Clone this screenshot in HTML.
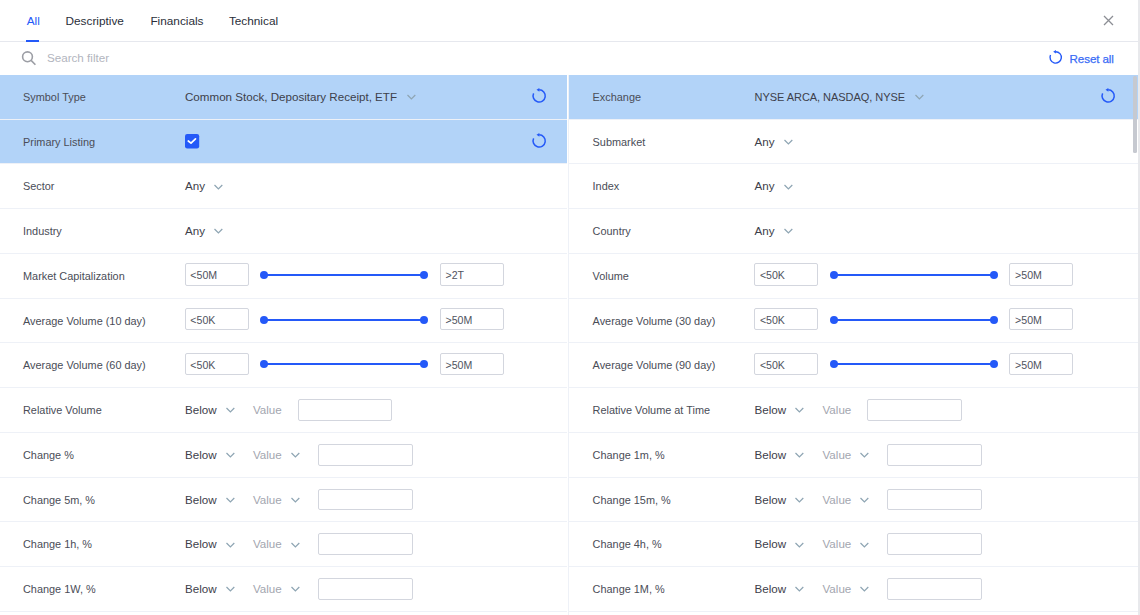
<!DOCTYPE html>
<html><head><meta charset="utf-8"><style>
html,body{margin:0;padding:0;width:1140px;height:615px;overflow:hidden;background:#fff;}
body{position:relative;font-family:"Liberation Sans",sans-serif;}
.abs{position:absolute;} svg{overflow:visible;}
.t{position:absolute;white-space:nowrap;line-height:1;}
.inp{position:absolute;box-sizing:border-box;border:1px solid #d3d6de;border-radius:2px;background:#fff;}
.dot{width:8px;height:8px;border-radius:50%;background:#2459f8;}
</style></head><body>
<div class="t" style="left:26.70px;top:16.01px;font-size:11.8px;color:#2459f8">All</div>
<div class="t" style="left:65.50px;top:16.01px;font-size:11.8px;color:#2a2e39">Descriptive</div>
<div class="t" style="left:150.40px;top:16.01px;font-size:11.8px;color:#2a2e39">Financials</div>
<div class="t" style="left:228.90px;top:16.01px;font-size:11.8px;color:#2a2e39">Technical</div>
<div class="abs" style="left:0;top:41px;width:1138px;height:1.4px;background:#e6e8ee"></div>
<div class="abs" style="left:26px;top:40px;width:13px;height:2.3px;background:#2459f8"></div>
<svg class="abs" style="left:1103.1px;top:15.3px" width="11" height="11" viewBox="0 0 11 11"><path d="M1 1 L10 10 M10 1 L1 10" stroke="#8c8e94" stroke-width="1.3"/></svg>
<svg class="abs" style="left:21px;top:50px" width="16" height="16" viewBox="0 0 16 16"><circle cx="6.5" cy="6.8" r="4.9" fill="none" stroke="#9c9ea5" stroke-width="1.6"/><path d="M10.1 10.4 L14.4 14.7" stroke="#9c9ea5" stroke-width="1.6"/></svg>
<div class="t" style="left:46.90px;top:51.53px;font-size:11.66px;color:#b2b5be">Search filter</div>
<svg class="abs" style="left:1048.50px;top:49.50px" width="14" height="14" viewBox="0 0 15 15"><path d="M1.62 5.32 A6.1 6.1 0 1 0 7.15 1.8" fill="none" stroke="#2459f8" stroke-width="1.5"/><path d="M4.5 1.8 L7.4 -0.1 L7.4 3.7 Z" fill="#2459f8"/></svg>
<div class="t" style="left:1069.60px;top:53.48px;font-size:11.6px;color:#3a6cf6"><span style="letter-spacing:-0.1px;-webkit-text-stroke:0.25px #3a6cf6">Reset all</span></div>
<div class="abs" style="left:0px;top:74.75px;width:567px;height:43.75px;background:#b2d3f8"></div>
<svg class="abs" style="left:532.00px;top:87.95px" width="15" height="15" viewBox="0 0 15 15"><path d="M1.62 5.32 A6.1 6.1 0 1 0 7.15 1.8" fill="none" stroke="#2459f8" stroke-width="1.5"/><path d="M4.5 1.8 L7.4 -0.1 L7.4 3.7 Z" fill="#2459f8"/></svg>
<div class="abs" style="left:0px;top:118.50px;width:567px;height:1px;background:#eef1f7"></div>
<div class="t" style="left:23.00px;top:91.82px;font-size:10.9px;color:#4a4d57">Symbol Type</div>
<div class="t" style="left:185.00px;top:90.93px;font-size:11.6px;color:#3d404a">Common Stock, Depositary Receipt, ETF</div>
<svg class="abs" style="left:406.85px;top:94.10px" width="9" height="6" viewBox="0 0 9 6"><path d="M0.5 1 L4.4 4.9 L8.3 1" fill="none" stroke="#8ea5b3" stroke-width="1.25"/></svg>
<div class="abs" style="left:0px;top:119.50px;width:567px;height:43.75px;background:#b2d3f8"></div>
<svg class="abs" style="left:532.00px;top:132.70px" width="15" height="15" viewBox="0 0 15 15"><path d="M1.62 5.32 A6.1 6.1 0 1 0 7.15 1.8" fill="none" stroke="#2459f8" stroke-width="1.5"/><path d="M4.5 1.8 L7.4 -0.1 L7.4 3.7 Z" fill="#2459f8"/></svg>
<div class="abs" style="left:0px;top:163.25px;width:567px;height:1px;background:#eef1f7"></div>
<div class="t" style="left:23.00px;top:136.57px;font-size:10.9px;color:#4a4d57">Primary Listing</div>
<svg class="abs" style="left:184.70px;top:134.30px" width="14.2" height="14.5" viewBox="0 0 14.2 14.5"><rect x="0" y="0" width="14.2" height="14.5" rx="2.2" fill="#2459f8"/><path d="M3.3 7.0 L6.0 9.1 L10.5 4.8" fill="none" stroke="#fff" stroke-width="1.7" stroke-linecap="round" stroke-linejoin="round"/></svg>
<div class="abs" style="left:0px;top:208.00px;width:567px;height:1px;background:#eef1f7"></div>
<div class="t" style="left:23.00px;top:181.32px;font-size:10.9px;color:#4a4d57">Sector</div>
<div class="t" style="left:185.00px;top:180.43px;font-size:11.6px;color:#3d404a">Any</div>
<svg class="abs" style="left:214.18px;top:183.50px" width="9" height="6" viewBox="0 0 9 6"><path d="M0.5 1 L4.4 4.9 L8.3 1" fill="none" stroke="#8ea5b3" stroke-width="1.25"/></svg>
<div class="abs" style="left:0px;top:252.75px;width:567px;height:1px;background:#eef1f7"></div>
<div class="t" style="left:23.00px;top:226.07px;font-size:10.9px;color:#4a4d57">Industry</div>
<div class="t" style="left:185.00px;top:225.18px;font-size:11.6px;color:#3d404a">Any</div>
<svg class="abs" style="left:214.18px;top:228.25px" width="9" height="6" viewBox="0 0 9 6"><path d="M0.5 1 L4.4 4.9 L8.3 1" fill="none" stroke="#8ea5b3" stroke-width="1.25"/></svg>
<div class="abs" style="left:0px;top:297.50px;width:567px;height:1px;background:#eef1f7"></div>
<div class="t" style="left:23.00px;top:270.82px;font-size:10.9px;color:#4a4d57">Market Capitalization</div>
<div class="inp" style="left:184.60px;top:263.25px;width:64.20px;height:22.30px"></div><div class="t" style="left:190.30px;top:270.48px;font-size:10.6px;color:#50535e">&lt;50M</div>
<div class="abs" style="left:264.00px;top:274px;width:160.40px;height:2px;background:#2459f8"></div>
<div class="abs dot" style="left:260.10px;top:270.75px"></div>
<div class="abs dot" style="left:420.40px;top:270.75px"></div>
<div class="inp" style="left:439.80px;top:263.25px;width:64.00px;height:22.30px"></div><div class="t" style="left:445.50px;top:270.48px;font-size:10.6px;color:#50535e">&gt;2T</div>
<div class="abs" style="left:0px;top:342.25px;width:567px;height:1px;background:#eef1f7"></div>
<div class="t" style="left:23.00px;top:315.57px;font-size:10.9px;color:#4a4d57">Average Volume (10 day)</div>
<div class="inp" style="left:184.60px;top:308.00px;width:64.20px;height:22.30px"></div><div class="t" style="left:190.30px;top:315.23px;font-size:10.6px;color:#50535e">&lt;50K</div>
<div class="abs" style="left:264.00px;top:319px;width:160.40px;height:2px;background:#2459f8"></div>
<div class="abs dot" style="left:260.10px;top:315.50px"></div>
<div class="abs dot" style="left:420.40px;top:315.50px"></div>
<div class="inp" style="left:439.80px;top:308.00px;width:64.00px;height:22.30px"></div><div class="t" style="left:445.50px;top:315.23px;font-size:10.6px;color:#50535e">&gt;50M</div>
<div class="abs" style="left:0px;top:387.00px;width:567px;height:1px;background:#eef1f7"></div>
<div class="t" style="left:23.00px;top:360.32px;font-size:10.9px;color:#4a4d57">Average Volume (60 day)</div>
<div class="inp" style="left:184.60px;top:352.75px;width:64.20px;height:22.30px"></div><div class="t" style="left:190.30px;top:359.98px;font-size:10.6px;color:#50535e">&lt;50K</div>
<div class="abs" style="left:264.00px;top:363px;width:160.40px;height:2px;background:#2459f8"></div>
<div class="abs dot" style="left:260.10px;top:360.25px"></div>
<div class="abs dot" style="left:420.40px;top:360.25px"></div>
<div class="inp" style="left:439.80px;top:352.75px;width:64.00px;height:22.30px"></div><div class="t" style="left:445.50px;top:359.98px;font-size:10.6px;color:#50535e">&gt;50M</div>
<div class="abs" style="left:0px;top:431.75px;width:567px;height:1px;background:#eef1f7"></div>
<div class="t" style="left:23.00px;top:405.07px;font-size:10.9px;color:#4a4d57">Relative Volume</div>
<div class="t" style="left:185.00px;top:404.18px;font-size:11.6px;color:#3d404a">Below</div>
<svg class="abs" style="left:225.60px;top:407.45px" width="9" height="6" viewBox="0 0 9 6"><path d="M0.5 1 L4.4 4.9 L8.3 1" fill="none" stroke="#8ea5b3" stroke-width="1.25"/></svg>
<div class="t" style="left:252.90px;top:404.18px;font-size:11.6px;color:#a3a6af">Value</div>
<div class="inp" style="left:297.70px;top:399.20px;width:94.80px;height:21.65px"></div>
<div class="abs" style="left:0px;top:476.50px;width:567px;height:1px;background:#eef1f7"></div>
<div class="t" style="left:23.00px;top:449.82px;font-size:10.9px;color:#4a4d57">Change %</div>
<div class="t" style="left:185.00px;top:448.93px;font-size:11.6px;color:#3d404a">Below</div>
<svg class="abs" style="left:225.60px;top:452.20px" width="9" height="6" viewBox="0 0 9 6"><path d="M0.5 1 L4.4 4.9 L8.3 1" fill="none" stroke="#8ea5b3" stroke-width="1.25"/></svg>
<div class="t" style="left:252.90px;top:448.93px;font-size:11.6px;color:#a3a6af">Value</div>
<svg class="abs" style="left:290.70px;top:452.20px" width="9" height="6" viewBox="0 0 9 6"><path d="M0.5 1 L4.4 4.9 L8.3 1" fill="none" stroke="#8ea5b3" stroke-width="1.25"/></svg>
<div class="inp" style="left:318.10px;top:443.95px;width:94.80px;height:21.65px"></div>
<div class="abs" style="left:0px;top:521.25px;width:567px;height:1px;background:#eef1f7"></div>
<div class="t" style="left:23.00px;top:494.57px;font-size:10.9px;color:#4a4d57">Change 5m, %</div>
<div class="t" style="left:185.00px;top:493.68px;font-size:11.6px;color:#3d404a">Below</div>
<svg class="abs" style="left:225.60px;top:496.95px" width="9" height="6" viewBox="0 0 9 6"><path d="M0.5 1 L4.4 4.9 L8.3 1" fill="none" stroke="#8ea5b3" stroke-width="1.25"/></svg>
<div class="t" style="left:252.90px;top:493.68px;font-size:11.6px;color:#a3a6af">Value</div>
<svg class="abs" style="left:290.70px;top:496.95px" width="9" height="6" viewBox="0 0 9 6"><path d="M0.5 1 L4.4 4.9 L8.3 1" fill="none" stroke="#8ea5b3" stroke-width="1.25"/></svg>
<div class="inp" style="left:318.10px;top:488.70px;width:94.80px;height:21.65px"></div>
<div class="abs" style="left:0px;top:566.00px;width:567px;height:1px;background:#eef1f7"></div>
<div class="t" style="left:23.00px;top:539.32px;font-size:10.9px;color:#4a4d57">Change 1h, %</div>
<div class="t" style="left:185.00px;top:538.43px;font-size:11.6px;color:#3d404a">Below</div>
<svg class="abs" style="left:225.60px;top:541.70px" width="9" height="6" viewBox="0 0 9 6"><path d="M0.5 1 L4.4 4.9 L8.3 1" fill="none" stroke="#8ea5b3" stroke-width="1.25"/></svg>
<div class="t" style="left:252.90px;top:538.43px;font-size:11.6px;color:#a3a6af">Value</div>
<svg class="abs" style="left:290.70px;top:541.70px" width="9" height="6" viewBox="0 0 9 6"><path d="M0.5 1 L4.4 4.9 L8.3 1" fill="none" stroke="#8ea5b3" stroke-width="1.25"/></svg>
<div class="inp" style="left:318.10px;top:533.45px;width:94.80px;height:21.65px"></div>
<div class="abs" style="left:0px;top:610.75px;width:567px;height:1px;background:#eef1f7"></div>
<div class="t" style="left:23.00px;top:584.07px;font-size:10.9px;color:#4a4d57">Change 1W, %</div>
<div class="t" style="left:185.00px;top:583.18px;font-size:11.6px;color:#3d404a">Below</div>
<svg class="abs" style="left:225.60px;top:586.45px" width="9" height="6" viewBox="0 0 9 6"><path d="M0.5 1 L4.4 4.9 L8.3 1" fill="none" stroke="#8ea5b3" stroke-width="1.25"/></svg>
<div class="t" style="left:252.90px;top:583.18px;font-size:11.6px;color:#a3a6af">Value</div>
<svg class="abs" style="left:290.70px;top:586.45px" width="9" height="6" viewBox="0 0 9 6"><path d="M0.5 1 L4.4 4.9 L8.3 1" fill="none" stroke="#8ea5b3" stroke-width="1.25"/></svg>
<div class="inp" style="left:318.10px;top:578.20px;width:94.80px;height:21.65px"></div>
<div class="abs" style="left:569px;top:74.75px;width:569px;height:43.75px;background:#b2d3f8"></div>
<svg class="abs" style="left:1101.00px;top:87.95px" width="15" height="15" viewBox="0 0 15 15"><path d="M1.62 5.32 A6.1 6.1 0 1 0 7.15 1.8" fill="none" stroke="#2459f8" stroke-width="1.5"/><path d="M4.5 1.8 L7.4 -0.1 L7.4 3.7 Z" fill="#2459f8"/></svg>
<div class="abs" style="left:569px;top:118.50px;width:569px;height:1px;background:#eef1f7"></div>
<div class="t" style="left:592.60px;top:91.82px;font-size:10.9px;color:#4a4d57">Exchange</div>
<div class="t" style="left:754.60px;top:92.24px;font-size:11.0px;color:#3d404a"><span style="letter-spacing:-0.05px">NYSE ARCA, NASDAQ, NYSE</span></div>
<svg class="abs" style="left:914.80px;top:94.20px" width="9" height="6" viewBox="0 0 9 6"><path d="M0.5 1 L4.4 4.9 L8.3 1" fill="none" stroke="#8ea5b3" stroke-width="1.25"/></svg>
<div class="abs" style="left:569px;top:163.25px;width:569px;height:1px;background:#eef1f7"></div>
<div class="t" style="left:592.60px;top:136.57px;font-size:10.9px;color:#4a4d57">Submarket</div>
<div class="t" style="left:754.60px;top:135.68px;font-size:11.6px;color:#3d404a">Any</div>
<svg class="abs" style="left:783.78px;top:138.75px" width="9" height="6" viewBox="0 0 9 6"><path d="M0.5 1 L4.4 4.9 L8.3 1" fill="none" stroke="#8ea5b3" stroke-width="1.25"/></svg>
<div class="abs" style="left:569px;top:208.00px;width:569px;height:1px;background:#eef1f7"></div>
<div class="t" style="left:592.60px;top:181.32px;font-size:10.9px;color:#4a4d57">Index</div>
<div class="t" style="left:754.60px;top:180.43px;font-size:11.6px;color:#3d404a">Any</div>
<svg class="abs" style="left:783.78px;top:183.50px" width="9" height="6" viewBox="0 0 9 6"><path d="M0.5 1 L4.4 4.9 L8.3 1" fill="none" stroke="#8ea5b3" stroke-width="1.25"/></svg>
<div class="abs" style="left:569px;top:252.75px;width:569px;height:1px;background:#eef1f7"></div>
<div class="t" style="left:592.60px;top:226.07px;font-size:10.9px;color:#4a4d57">Country</div>
<div class="t" style="left:754.60px;top:225.18px;font-size:11.6px;color:#3d404a">Any</div>
<svg class="abs" style="left:783.78px;top:228.25px" width="9" height="6" viewBox="0 0 9 6"><path d="M0.5 1 L4.4 4.9 L8.3 1" fill="none" stroke="#8ea5b3" stroke-width="1.25"/></svg>
<div class="abs" style="left:569px;top:297.50px;width:569px;height:1px;background:#eef1f7"></div>
<div class="t" style="left:592.60px;top:270.82px;font-size:10.9px;color:#4a4d57">Volume</div>
<div class="inp" style="left:754.20px;top:263.25px;width:64.20px;height:22.30px"></div><div class="t" style="left:759.90px;top:270.48px;font-size:10.6px;color:#50535e">&lt;50K</div>
<div class="abs" style="left:833.60px;top:274px;width:160.40px;height:2px;background:#2459f8"></div>
<div class="abs dot" style="left:829.70px;top:270.75px"></div>
<div class="abs dot" style="left:990.00px;top:270.75px"></div>
<div class="inp" style="left:1009.40px;top:263.25px;width:64.00px;height:22.30px"></div><div class="t" style="left:1015.10px;top:270.48px;font-size:10.6px;color:#50535e">&gt;50M</div>
<div class="abs" style="left:569px;top:342.25px;width:569px;height:1px;background:#eef1f7"></div>
<div class="t" style="left:592.60px;top:315.57px;font-size:10.9px;color:#4a4d57">Average Volume (30 day)</div>
<div class="inp" style="left:754.20px;top:308.00px;width:64.20px;height:22.30px"></div><div class="t" style="left:759.90px;top:315.23px;font-size:10.6px;color:#50535e">&lt;50K</div>
<div class="abs" style="left:833.60px;top:319px;width:160.40px;height:2px;background:#2459f8"></div>
<div class="abs dot" style="left:829.70px;top:315.50px"></div>
<div class="abs dot" style="left:990.00px;top:315.50px"></div>
<div class="inp" style="left:1009.40px;top:308.00px;width:64.00px;height:22.30px"></div><div class="t" style="left:1015.10px;top:315.23px;font-size:10.6px;color:#50535e">&gt;50M</div>
<div class="abs" style="left:569px;top:387.00px;width:569px;height:1px;background:#eef1f7"></div>
<div class="t" style="left:592.60px;top:360.32px;font-size:10.9px;color:#4a4d57">Average Volume (90 day)</div>
<div class="inp" style="left:754.20px;top:352.75px;width:64.20px;height:22.30px"></div><div class="t" style="left:759.90px;top:359.98px;font-size:10.6px;color:#50535e">&lt;50K</div>
<div class="abs" style="left:833.60px;top:363px;width:160.40px;height:2px;background:#2459f8"></div>
<div class="abs dot" style="left:829.70px;top:360.25px"></div>
<div class="abs dot" style="left:990.00px;top:360.25px"></div>
<div class="inp" style="left:1009.40px;top:352.75px;width:64.00px;height:22.30px"></div><div class="t" style="left:1015.10px;top:359.98px;font-size:10.6px;color:#50535e">&gt;50M</div>
<div class="abs" style="left:569px;top:431.75px;width:569px;height:1px;background:#eef1f7"></div>
<div class="t" style="left:592.60px;top:405.07px;font-size:10.9px;color:#4a4d57">Relative Volume at Time</div>
<div class="t" style="left:754.60px;top:404.18px;font-size:11.6px;color:#3d404a">Below</div>
<svg class="abs" style="left:795.20px;top:407.45px" width="9" height="6" viewBox="0 0 9 6"><path d="M0.5 1 L4.4 4.9 L8.3 1" fill="none" stroke="#8ea5b3" stroke-width="1.25"/></svg>
<div class="t" style="left:822.50px;top:404.18px;font-size:11.6px;color:#a3a6af">Value</div>
<div class="inp" style="left:866.50px;top:399.20px;width:95.20px;height:21.65px"></div>
<div class="abs" style="left:569px;top:476.50px;width:569px;height:1px;background:#eef1f7"></div>
<div class="t" style="left:592.60px;top:449.82px;font-size:10.9px;color:#4a4d57">Change 1m, %</div>
<div class="t" style="left:754.60px;top:448.93px;font-size:11.6px;color:#3d404a">Below</div>
<svg class="abs" style="left:795.20px;top:452.20px" width="9" height="6" viewBox="0 0 9 6"><path d="M0.5 1 L4.4 4.9 L8.3 1" fill="none" stroke="#8ea5b3" stroke-width="1.25"/></svg>
<div class="t" style="left:822.50px;top:448.93px;font-size:11.6px;color:#a3a6af">Value</div>
<svg class="abs" style="left:860.30px;top:452.20px" width="9" height="6" viewBox="0 0 9 6"><path d="M0.5 1 L4.4 4.9 L8.3 1" fill="none" stroke="#8ea5b3" stroke-width="1.25"/></svg>
<div class="inp" style="left:886.90px;top:443.95px;width:95.20px;height:21.65px"></div>
<div class="abs" style="left:569px;top:521.25px;width:569px;height:1px;background:#eef1f7"></div>
<div class="t" style="left:592.60px;top:494.57px;font-size:10.9px;color:#4a4d57">Change 15m, %</div>
<div class="t" style="left:754.60px;top:493.68px;font-size:11.6px;color:#3d404a">Below</div>
<svg class="abs" style="left:795.20px;top:496.95px" width="9" height="6" viewBox="0 0 9 6"><path d="M0.5 1 L4.4 4.9 L8.3 1" fill="none" stroke="#8ea5b3" stroke-width="1.25"/></svg>
<div class="t" style="left:822.50px;top:493.68px;font-size:11.6px;color:#a3a6af">Value</div>
<svg class="abs" style="left:860.30px;top:496.95px" width="9" height="6" viewBox="0 0 9 6"><path d="M0.5 1 L4.4 4.9 L8.3 1" fill="none" stroke="#8ea5b3" stroke-width="1.25"/></svg>
<div class="inp" style="left:886.90px;top:488.70px;width:95.20px;height:21.65px"></div>
<div class="abs" style="left:569px;top:566.00px;width:569px;height:1px;background:#eef1f7"></div>
<div class="t" style="left:592.60px;top:539.32px;font-size:10.9px;color:#4a4d57">Change 4h, %</div>
<div class="t" style="left:754.60px;top:538.43px;font-size:11.6px;color:#3d404a">Below</div>
<svg class="abs" style="left:795.20px;top:541.70px" width="9" height="6" viewBox="0 0 9 6"><path d="M0.5 1 L4.4 4.9 L8.3 1" fill="none" stroke="#8ea5b3" stroke-width="1.25"/></svg>
<div class="t" style="left:822.50px;top:538.43px;font-size:11.6px;color:#a3a6af">Value</div>
<svg class="abs" style="left:860.30px;top:541.70px" width="9" height="6" viewBox="0 0 9 6"><path d="M0.5 1 L4.4 4.9 L8.3 1" fill="none" stroke="#8ea5b3" stroke-width="1.25"/></svg>
<div class="inp" style="left:886.90px;top:533.45px;width:95.20px;height:21.65px"></div>
<div class="abs" style="left:569px;top:610.75px;width:569px;height:1px;background:#eef1f7"></div>
<div class="t" style="left:592.60px;top:584.07px;font-size:10.9px;color:#4a4d57">Change 1M, %</div>
<div class="t" style="left:754.60px;top:583.18px;font-size:11.6px;color:#3d404a">Below</div>
<svg class="abs" style="left:795.20px;top:586.45px" width="9" height="6" viewBox="0 0 9 6"><path d="M0.5 1 L4.4 4.9 L8.3 1" fill="none" stroke="#8ea5b3" stroke-width="1.25"/></svg>
<div class="t" style="left:822.50px;top:583.18px;font-size:11.6px;color:#a3a6af">Value</div>
<svg class="abs" style="left:860.30px;top:586.45px" width="9" height="6" viewBox="0 0 9 6"><path d="M0.5 1 L4.4 4.9 L8.3 1" fill="none" stroke="#8ea5b3" stroke-width="1.25"/></svg>
<div class="inp" style="left:886.90px;top:578.20px;width:95.20px;height:21.65px"></div>
<div class="abs" style="left:567.5px;top:74.75px;width:1.3px;height:541px;background:#eef1f7"></div>
<div class="abs" style="left:1137.8px;top:0;width:2.2px;height:615px;background:#e8e9ec"></div>
<div class="abs" style="left:1133px;top:76px;width:4.4px;height:77px;border-radius:1.5px;background:#c6c9d0"></div>
</body></html>
